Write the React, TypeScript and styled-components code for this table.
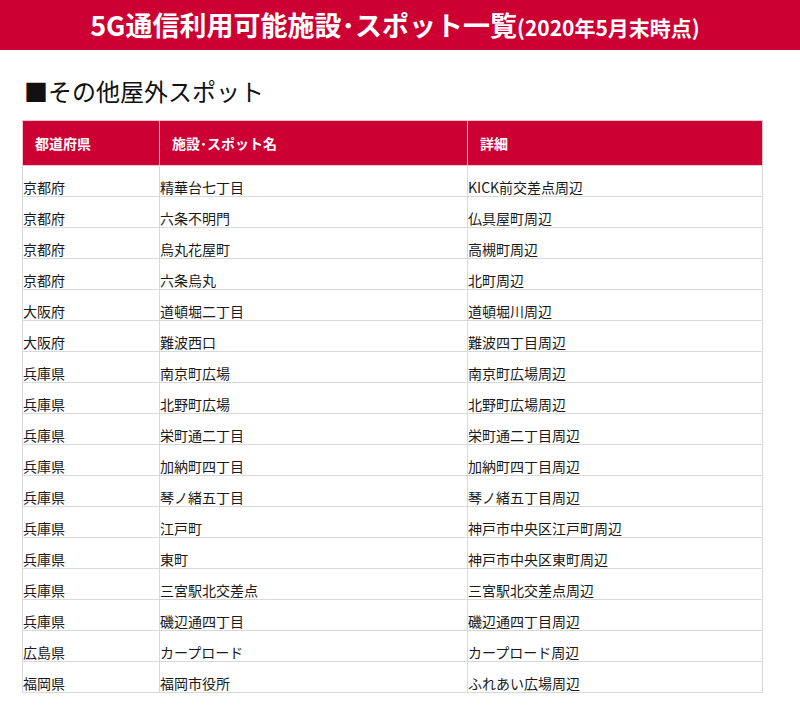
import React from "react";
import styled, { createGlobalStyle } from "styled-components";

const GlobalStyle = createGlobalStyle`
    body {
        margin: 0;
        background: #fff;
        font-family: "Noto Sans CJK JP", "Noto Sans", sans-serif;
        color: #1a1a1a;
    }
`;

const RED = "#cc0033";

const TitleBar = styled.div`
    height: 50px;
    background: ${RED};
    display: flex;
    align-items: center;
    justify-content: center;
    padding-right: 10px;
    color: #fff;
    font-weight: 700;
`;

const TitleMain = styled.span`
    font-size: 27px;
    line-height: 30px;
`;

const TitleSub = styled.span`
    font-size: 21px;
    line-height: 30px;
    align-self: flex-end;
    padding-bottom: 8px;
`;

const Content = styled.div`
    padding: 0 38px 0 22px;
`;

const SectionHeading = styled.h2`
    margin: 0;
    padding: 26px 0 14px 2px;
    font-size: 24px;
    line-height: 30px;
    font-weight: 400;
    color: #111;
`;

const Table = styled.table`
    width: 740px;
    border-collapse: collapse;
    table-layout: fixed;
`;

const HeadCell = styled.th`
    box-sizing: border-box;
    height: 45px;
    padding: 0 0 0 12px;
    background: ${RED};
    color: #fff;
    text-align: left;
    font-size: 14px;
    font-weight: 700;
    border: 1px solid #f2c3cd;
`;

const Cell = styled.td`
    height: 29px;
    padding: 0 0 1px 0;
    vertical-align: bottom;
    font-size: 14px;
    line-height: 16px;
    border: 1px solid #d9d9d9;
    white-space: nowrap;
`;

const rows: [string, string, string][] = [
    ["京都府", "精華台七丁目", "KICK前交差点周辺"],
    ["京都府", "六条不明門", "仏具屋町周辺"],
    ["京都府", "烏丸花屋町", "高槻町周辺"],
    ["京都府", "六条烏丸", "北町周辺"],
    ["大阪府", "道頓堀二丁目", "道頓堀川周辺"],
    ["大阪府", "難波西口", "難波四丁目周辺"],
    ["兵庫県", "南京町広場", "南京町広場周辺"],
    ["兵庫県", "北野町広場", "北野町広場周辺"],
    ["兵庫県", "栄町通二丁目", "栄町通二丁目周辺"],
    ["兵庫県", "加納町四丁目", "加納町四丁目周辺"],
    ["兵庫県", "琴ノ緒五丁目", "琴ノ緒五丁目周辺"],
    ["兵庫県", "江戸町", "神戸市中央区江戸町周辺"],
    ["兵庫県", "東町", "神戸市中央区東町周辺"],
    ["兵庫県", "三宮駅北交差点", "三宮駅北交差点周辺"],
    ["兵庫県", "磯辺通四丁目", "磯辺通四丁目周辺"],
    ["広島県", "カープロード", "カープロード周辺"],
    ["福岡県", "福岡市役所", "ふれあい広場周辺"],
];

export default function App() {
    return (
        <>
            <GlobalStyle />
            <TitleBar>
                <TitleMain>5G通信利用可能施設･スポット一覧</TitleMain>
                <TitleSub>(2020年5月末時点)</TitleSub>
            </TitleBar>
            <Content>
                <SectionHeading>■その他屋外スポット</SectionHeading>
                <Table>
                    <colgroup>
                        <col style={{ width: 137 }} />
                        <col style={{ width: 308 }} />
                        <col style={{ width: 295 }} />
                    </colgroup>
                    <thead>
                        <tr>
                            <HeadCell>都道府県</HeadCell>
                            <HeadCell>施設･スポット名</HeadCell>
                            <HeadCell>詳細</HeadCell>
                        </tr>
                    </thead>
                    <tbody>
                        {rows.map(([pref, spot, detail], i) => (
                            <tr key={`row-${i}`}>
                                <Cell>{pref}</Cell>
                                <Cell>{spot}</Cell>
                                <Cell>{detail}</Cell>
                            </tr>
                        ))}
                    </tbody>
                </Table>
            </Content>
        </>
    );
}
